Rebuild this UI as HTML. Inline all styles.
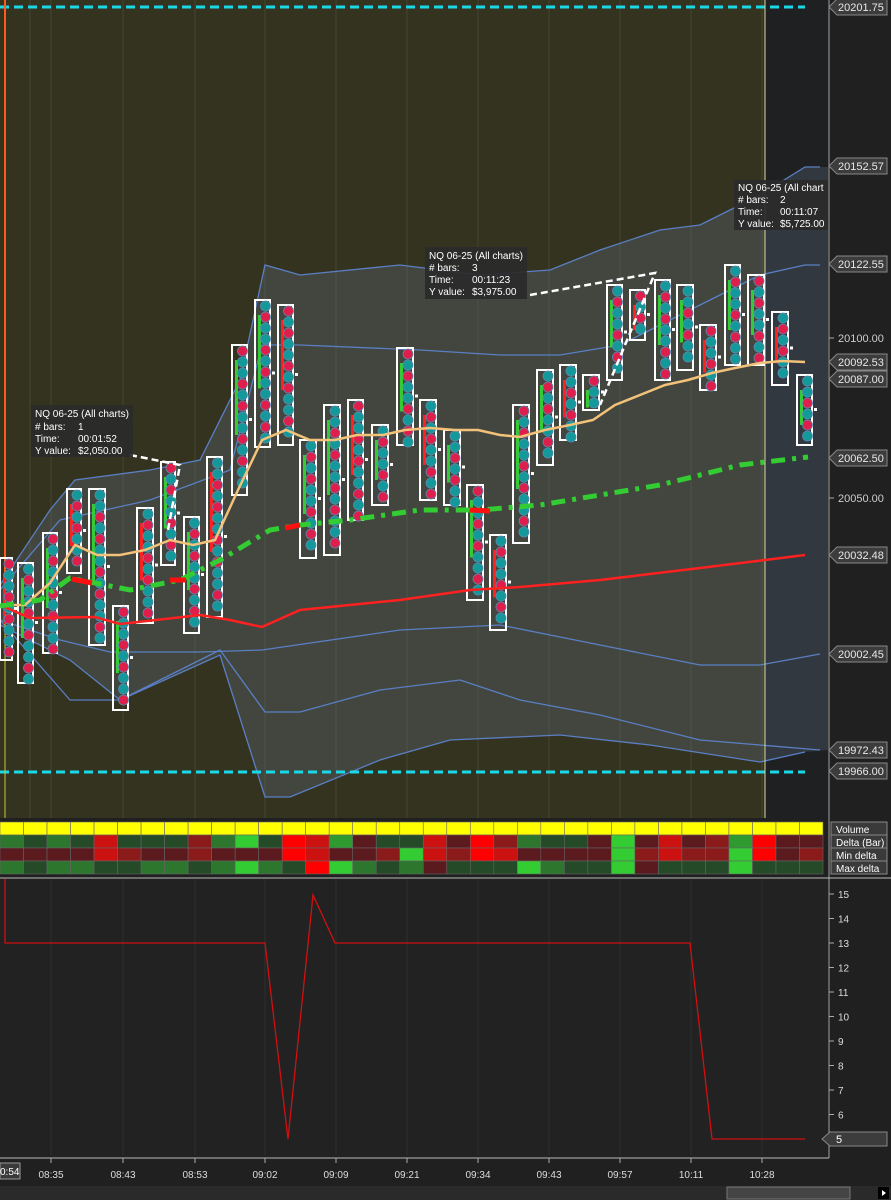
<!DOCTYPE html>
<html><head><meta charset="utf-8"><style>
html,body{margin:0;padding:0;background:#202020;width:891px;height:1200px;overflow:hidden;font-family:"Liberation Sans",sans-serif}
svg{display:block}
</style></head><body>
<svg id="s" width="891" height="1200" xmlns="http://www.w3.org/2000/svg" font-family="Liberation Sans, sans-serif">
<rect width="891" height="1200" fill="#202020"/>
<rect x="0" y="0" width="765" height="818" fill="#343320"/>
<rect x="765" y="0" width="63" height="818" fill="#1f2022"/>
<g id="grid" stroke="#45452f" stroke-width="1"></g>
<polygon fill="rgba(120,140,170,0.22)" points="0,585 50,510 75,480 150,470 200,460 240,380 265,265 300,275 400,265 480,275 550,270 600,250 660,230 700,225 760,195 805,167 828,167 828,750 805,752 760,762 650,745 560,735 450,740 380,760 290,797 265,797 220,655 120,700 70,660 0,625"/>
<g fill="none" stroke="#5a7fc4" stroke-width="1.3">
<polyline points="0,585 50,510 75,480 150,470 200,460 240,380 265,265 300,275 400,265 480,275 550,270 600,250 660,230 700,225 760,195 805,167 820,167"/>
<polyline points="0,590 60,520 150,500 230,470 262,345 300,345 420,350 500,355 560,355 620,345 700,305 760,275 805,265 820,265"/>
<polyline points="0,620 60,640 110,652 200,652 262,650 400,630 500,625 600,645 700,665 760,665 820,654"/>
<polyline points="0,620 70,700 120,700 220,650 265,712 300,712 380,690 460,680 520,700 600,715 700,740 760,745 820,750"/>
<polyline points="0,625 70,660 120,700 220,655 265,797 290,797 380,760 450,740 560,735 650,745 760,762 805,752"/>
</g>
<line x1="0" y1="7" x2="805" y2="7" stroke="#19d8e8" stroke-width="3" stroke-dasharray="9,5"/>
<line x1="0" y1="772" x2="805" y2="772" stroke="#19d8e8" stroke-width="3" stroke-dasharray="9,5"/>
<line x1="5" y1="0" x2="5" y2="605" stroke="#ff5a1a" stroke-width="2"/>
<line x1="5" y1="605" x2="5" y2="818" stroke="#c8c830" stroke-width="1"/>
<line x1="765" y1="0" x2="765" y2="818" stroke="#d8d8a0" stroke-width="1"/>
<g id="bars"></g>
<polyline fill="none" stroke="#f3c27a" stroke-width="2.5" points="0,605 25,605 50,583 75,545 97,555 120,555 145,550 170,540 193,545 215,540 238,490 262,440 286,430 310,440 335,440 357,435 383,435 405,430 430,428 455,430 478,430 500,435 520,437 545,430 570,425 593,420 615,405 640,395 665,385 688,380 712,373 735,368 760,363 782,361 805,362"/>
<polyline fill="none" stroke="#ff2020" stroke-width="2.5" points="0,605 30,618 95,617 120,624 200,615 230,620 262,627 300,610 400,600 470,590 520,587 600,580 700,568 805,555"/>
<polyline fill="none" stroke="#33cc33" stroke-width="5" stroke-dasharray="14,7,4,7" points="0,606 40,600 70,578 130,590 180,580 220,560 270,530 300,525 350,520 420,510 480,510 540,505 600,495 660,485 740,465 808,457"/>
<g stroke="#ff1010" stroke-width="5"><line x1="72" y1="579" x2="92" y2="583"/><line x1="170" y1="580" x2="186" y2="580"/><line x1="285" y1="528" x2="300" y2="525"/><line x1="470" y1="510" x2="490" y2="511"/></g>
<g fill="none" stroke="#fff" stroke-width="2.5" stroke-dasharray="7,4">
<polyline points="130,455 180,465 168,530"/><polyline points="530,295 655,273 600,405"/>
</g>
<g font-size="10" fill="#fff">
<rect x="31" y="405" width="102" height="52" fill="#2a2a2a" opacity="0.92"/>
<text x="35" y="417">NQ 06-25 (All charts)</text><text x="35" y="430"># bars:</text><text x="78" y="430">1</text><text x="35" y="442">Time:</text><text x="78" y="442">00:01:52</text><text x="35" y="454">Y value:</text><text x="78" y="454">$2,050.00</text>
<rect x="425" y="247" width="102" height="52" fill="#2a2a2a" opacity="0.92"/>
<text x="429" y="259">NQ 06-25 (All charts)</text><text x="429" y="271"># bars:</text><text x="472" y="271">3</text><text x="429" y="283">Time:</text><text x="472" y="283">00:11:23</text><text x="429" y="295">Y value:</text><text x="472" y="295">$3,975.00</text>
<rect x="734" y="180" width="94" height="50" fill="#2a2a2a" opacity="0.92"/>
<text x="738" y="191">NQ 06-25 (All chart</text><text x="738" y="203"># bars:</text><text x="780" y="203">2</text><text x="738" y="215">Time:</text><text x="780" y="215">00:11:07</text><text x="738" y="227">Y value:</text><text x="780" y="227">$5,725.00</text>
</g>
<line x1="829" y1="0" x2="829" y2="1158" stroke="#a0a0a0"/>
<g id="plab" font-size="11" fill="#e8e8e8"></g>
<rect x="0" y="818" width="828" height="4" fill="#202020"/>
<g id="tbl"></g>
<g font-size="10" fill="#fff">
<rect x="831" y="822" width="56" height="13" fill="#3a3a3a" stroke="#888"/><text x="836" y="833">Volume</text>
<rect x="831" y="835" width="56" height="13" fill="#3a3a3a" stroke="#888"/><text x="836" y="846">Delta (Bar)</text>
<rect x="831" y="848" width="56" height="13" fill="#3a3a3a" stroke="#888"/><text x="836" y="859">Min delta</text>
<rect x="831" y="861" width="56" height="13" fill="#3a3a3a" stroke="#888"/><text x="836" y="872">Max delta</text>
</g>
<line x1="0" y1="878" x2="891" y2="878" stroke="#bbb"/>
<rect x="0" y="879" width="828" height="279" fill="#222"/>
<g id="grid2" stroke="#2e2e2e"></g>
<polyline fill="none" stroke="#d01010" stroke-width="1.3" points="5,879 5,943 265,943 288,1139 313,895 335,943 690,943 712,1139 805,1139"/>
<line x1="0" y1="1158" x2="829" y2="1158" stroke="#bbb"/>
<g id="lab2" font-size="10" fill="#ddd"></g>
<g id="tlab" font-size="10" fill="#ddd"></g>
<rect x="0" y="1163" width="20" height="16" fill="#3a3a3a" stroke="#999"/><text x="0" y="1175" font-size="10" fill="#fff">0:54</text>
<rect x="0" y="1186" width="891" height="14" fill="#2a2a2a"/>
<rect x="727" y="1187" width="123" height="12" fill="#444" stroke="#777"/>
<rect x="878" y="1187" width="11" height="12" fill="#000"/><polygon points="882,1190 886,1193 882,1196" fill="#fff"/>
</svg>
<script>
const NS="http://www.w3.org/2000/svg";
function el(p,t,a,txt){const e=document.createElementNS(NS,t);for(const k in a)e.setAttribute(k,a[k]);if(txt!==undefined)e.textContent=txt;p.appendChild(e);return e;}
const g=document.getElementById('grid');
[30,51,123,195,265,336,407,478,549,620,691,762].forEach(x=>el(g,'line',{x1:x,y1:0,x2:x,y2:818}));
const g2=document.getElementById('grid2');
[51,123,195,265,336,407,478,549,620,691,762].forEach(x=>el(g2,'line',{x1:x,y1:879,x2:x,y2:1155}));
const bars=[[0,12,558,660],[18,33,563,683],[43,57,533,653],[67,81,489,573],[89,105,489,645],[113,128,606,710],[137,153,508,623],[161,175,462,565],[184,199,517,633],[207,222,457,617],[232,247,345,495],[255,270,300,447],[278,293,305,445],[300,316,440,558],[324,340,405,555],[348,363,400,520],[372,388,425,505],[397,413,348,445],[420,436,400,500],[444,460,430,505],[467,483,485,600],[490,506,535,630],[513,529,405,543],[537,553,370,465],[560,576,365,440],[583,599,375,410],[607,622,285,380],[630,645,290,340],[655,670,280,380],[677,693,285,370],[700,716,325,390],[725,740,265,365],[748,764,275,365],[772,788,312,385],[797,812,375,445]];
const b=document.getElementById('bars');
bars.forEach((r,i)=>{
 el(b,'rect',{x:r[0],y:r[2],width:r[1]-r[0],height:r[3]-r[2],fill:'none',stroke:'#fff','stroke-width':2});
 el(b,'rect',{x:r[0]+3,y:r[2]+15,width:3,height:(r[3]-r[2])*0.5,fill:i%3?'#33cc33':'#ff2020'});
 const cx=(r[0]+r[1])/2+3;
 let k=0;for(let y=r[2]+6;y<r[3]-2;y+=11){el(b,'circle',{cx:cx,cy:y,r:5,fill:((k*7+i*3)%5<2)?'#e01e4c':'#13999a',stroke:'#5a8ab0','stroke-width':0.8});k++;}
 el(b,'rect',{x:r[1]+2,y:(r[2]+r[3])/2-2,width:3,height:3,fill:'#fff'});
});
const pl=document.getElementById('plab');
[[7,'20201.75'],[166,'20152.57'],[264,'20122.55'],[362,'20092.53'],[379,'20087.00'],[458,'20062.50'],[555,'20032.48'],[654,'20002.45'],[750,'19972.43'],[771,'19966.00']].forEach(a=>{
 const y=a[0];el(pl,'polygon',{points:`829,${y} 837,${y-8} 887,${y-8} 887,${y+8} 837,${y+8}`,fill:'#3c3c3c',stroke:'#888'});
 el(pl,'text',{x:838,y:y+4},a[1]);});
[[338,'20100.00'],[498,'20050.00']].forEach(a=>{el(pl,'line',{x1:829,y1:a[0],x2:834,y2:a[0],stroke:'#aaa'});el(pl,'text',{x:838,y:a[0]+4,fill:'#ccc'},a[1]);});
const C={G:'#2c762d',D:'#244a28',L:'#33cc33',R:'#ff0000',r:'#cc1111',m:'#5a1a1e',M:'#8b1a1a',g:'#2e9a30'};
const rows=['GDGDrDDDMGLDRrgmDDrmRMGDDmLmrmMgRmm','mmmmrMmmMmmmRrmmMLrMRrmmmmLMrMMLRmM','GDGGDDGGDGLGDRLGDGmDDDLGDDLmDDDLDDD'];
const t=document.getElementById('tbl');const w=823/35;
for(let c=0;c<35;c++){el(t,'rect',{x:c*w,y:822,width:w,height:13,fill:'#ffff00',stroke:'#666','stroke-width':0.6});
 rows.forEach((s,ri)=>el(t,'rect',{x:c*w,y:835+ri*13,width:w,height:13,fill:C[s[c]],stroke:'#666','stroke-width':0.6}));}
const l2=document.getElementById('lab2');
for(let v=15;v>=6;v--){const y=894+(15-v)*24.5;el(l2,'line',{x1:829,y1:y,x2:834,y2:y,stroke:'#aaa'});el(l2,'text',{x:838,y:y+4},String(v));}
el(l2,'polygon',{points:'822,1139 830,1132 887,1132 887,1146 830,1146',fill:'#3c3c3c',stroke:'#888'});el(l2,'text',{x:836,y:1143,fill:'#fff','font-size':11},'5');
const tl=document.getElementById('tlab');
[[51,'08:35'],[123,'08:43'],[195,'08:53'],[265,'09:02'],[336,'09:09'],[407,'09:21'],[478,'09:34'],[549,'09:43'],[620,'09:57'],[691,'10:11'],[762,'10:28']].forEach(a=>{el(tl,'line',{x1:a[0],y1:1158,x2:a[0],y2:1163,stroke:'#aaa'});el(tl,'text',{x:a[0],y:1178,'text-anchor':'middle'},a[1]);});
</script>
</body></html>
